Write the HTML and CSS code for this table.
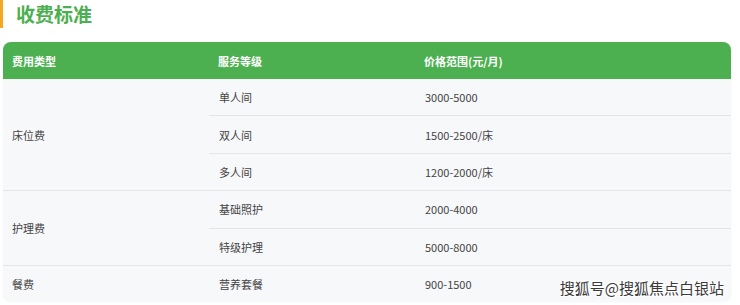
FILE: index.html
```html
<!DOCTYPE html>
<html lang="zh">
<head>
  <meta charset="UTF-8">
  <title>收费标准</title>
  <link rel="stylesheet" href="styles.css">
</head>
<body>
  <div class="page">
    <h2 class="section-title">收费标准</h2>
    <div class="table-wrap">
      <table class="fee-table">
        <thead>
          <tr>
            <th class="col-type">费用类型</th>
            <th class="col-level">服务等级</th>
            <th>价格范围(元/月)</th>
          </tr>
        </thead>
        <tbody>
          <tr>
            <td rowspan="3" class="group">床位费</td>
            <td>单人间</td>
            <td>3000-5000</td>
          </tr>
          <tr>
            <td>双人间</td>
            <td>1500-2500/床</td>
          </tr>
          <tr class="group-end">
            <td>多人间</td>
            <td>1200-2000/床</td>
          </tr>
          <tr>
            <td rowspan="2" class="group">护理费</td>
            <td>基础照护</td>
            <td>2000-4000</td>
          </tr>
          <tr class="group-end">
            <td>特级护理</td>
            <td>5000-8000</td>
          </tr>
          <tr class="last">
            <td class="group">餐费</td>
            <td>营养套餐</td>
            <td>900-1500</td>
          </tr>
        </tbody>
      </table>
      <div class="watermark">搜狐号@搜狐焦点白银站</div>
    </div>
  </div>
</body>
</html>
```

FILE: styles.css
```css
html, body {
  margin: 0;
  padding: 0;
  background: #fff;
  font-family: "Noto Sans CJK SC", "Noto Sans", sans-serif;
  color: #333;
}
.page {
  width: 740px;
  height: 305px;
  overflow: hidden;
}
.section-title {
  margin: 0 0 14px 0;
  height: 28px;
  line-height: 28px;
  border-left: 3px solid #f5a623;
  padding-left: 13px;
  font-size: 19px;
  font-weight: bold;
  color: #4caf50;
}
.table-wrap {
  position: relative;
  margin: 0 9px 0 3px;
  border-radius: 8px;
  overflow: hidden;
  background: #f7f8fa;
  box-shadow: 0 0 2px rgba(0, 0, 0, 0.06);
}
.fee-table {
  width: 100%;
  border-collapse: collapse;
  font-size: 11px;
}
.fee-table th {
  background: #4caf50;
  color: #fff;
  text-align: left;
  font-weight: bold;
  height: 37px;
  padding: 0 9px;
}
.fee-table .col-type,
.fee-table .col-level {
  width: 188px;
}
.fee-table td {
  height: 36.4px;
  padding: 0 10px;
  border-bottom: 1px solid #e3e5e9;
  color: #444;
}
.fee-table td.group {
  padding-left: 9px;
}
.fee-table tr.last td {
  border-bottom: none;
}
.watermark {
  position: absolute;
  right: 7px;
  bottom: 4px;
  font-size: 15px;
  color: #3a3a3a;
  text-shadow: 1px 1px 0 #fff, -1px -1px 0 #fff, 1px -1px 0 #fff, -1px 1px 0 #fff;
}
```
